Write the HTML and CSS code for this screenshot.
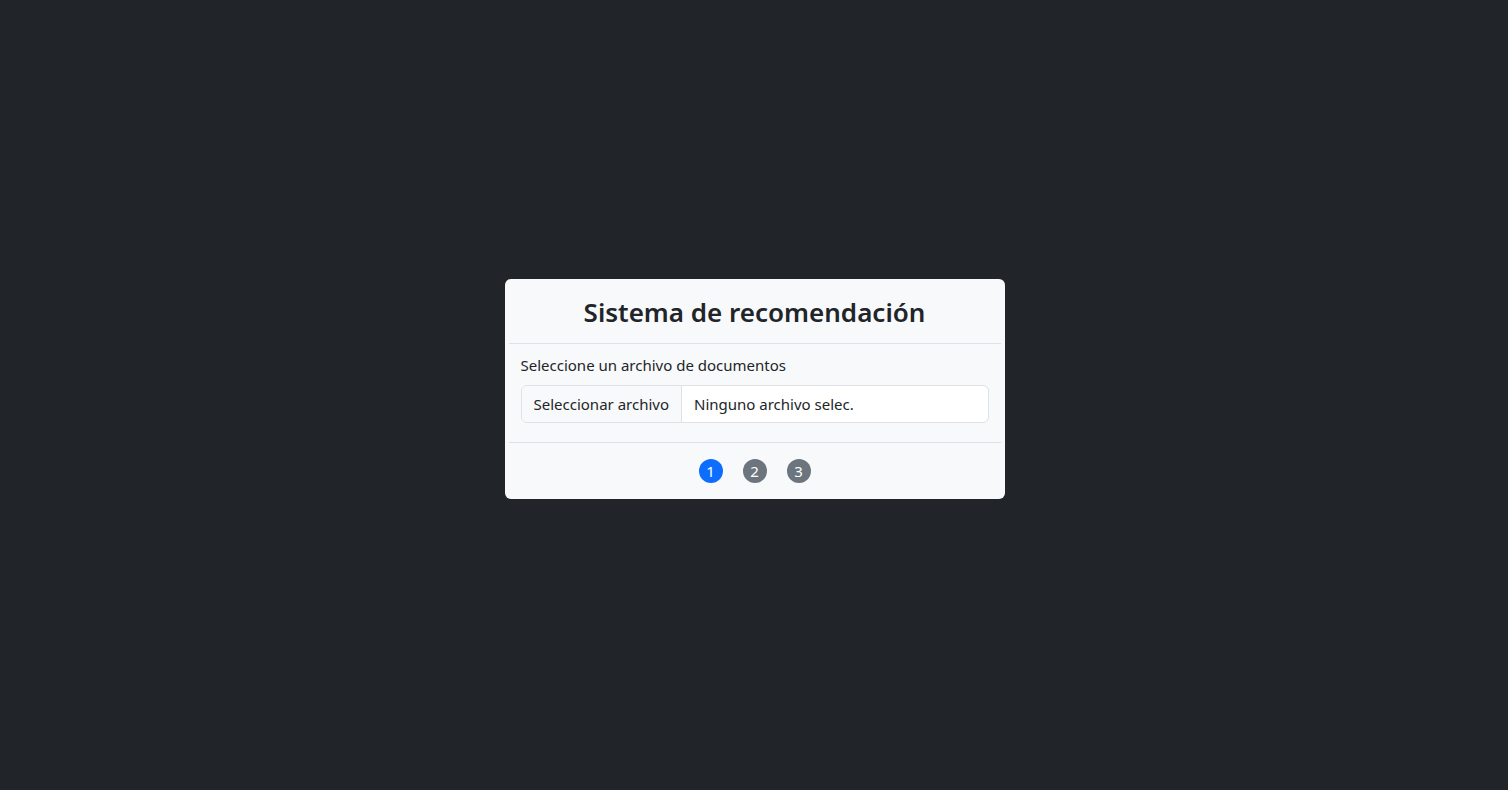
FILE: index.html
```html
<!DOCTYPE html>
<html lang="es">
<head>
<meta charset="utf-8">
<title>Sistema de recomendación</title>
<link rel="stylesheet" href="styles.css">
</head>
<body>
<main class="page">
  <section class="card">
    <header class="card-header">
      <h3 class="title">Sistema de recomendación</h3>
    </header>
    <div class="divider"></div>
    <div class="card-body">
      <label class="label">Seleccione un archivo de documentos</label>
      <div class="file-input">
        <span class="file-btn">Seleccionar archivo</span>
        <span class="file-name">Ninguno archivo selec.</span>
      </div>
    </div>
    <div class="divider"></div>
    <footer class="card-footer">
      <span class="step active">1</span>
      <span class="step">2</span>
      <span class="step">3</span>
    </footer>
  </section>
</main>
</body>
</html>
```

FILE: styles.css
```css
* { box-sizing: border-box; }
html, body { margin: 0; padding: 0; }
body {
  background: #212529;
  font-family: "Segoe UI", "Noto Sans", "Open Sans", sans-serif;
  color: #212529;
}
.page {
  min-height: 100vh;
  display: flex;
  justify-content: center;
  align-items: flex-start;
  padding-top: 279px;
  padding-left: 1px;
}
.card {
  width: 500px;
  background: #f8f9fa;
  border-radius: 6px;
  display: flex;
  flex-direction: column;
}
.card-header {
  height: 64px;
  padding-top: 4px;
  display: flex;
  align-items: center;
  justify-content: center;
}
.title {
  margin: 0;
  font-size: 26px;
  font-weight: 600;
  line-height: 1.2;
  color: #212529;
}
.divider {
  height: 1px;
  background: #dee2e6;
  margin: 0 4px;
}
.card-body {
  padding: 10px 16px 19px;
  display: flex;
  flex-direction: column;
}
.label {
  font-size: 15px;
  line-height: 22px;
  color: #212529;
  margin-bottom: 9px;
}
.file-input {
  display: flex;
  height: 38px;
  border: 1px solid #dee2e6;
  border-radius: 6px;
  background: #fff;
  overflow: hidden;
  font-size: 15px;
}
.file-btn {
  display: flex;
  align-items: center;
  padding: 0 12px;
  background: #f8f9fa;
  border-right: 1px solid #dee2e6;
  color: #212529;
}
.file-name {
  display: flex;
  align-items: center;
  padding: 0 12px;
  color: #212529;
}
.card-footer {
  height: 56px;
  display: flex;
  align-items: center;
  justify-content: center;
  gap: 20px;
}
.step {
  width: 24px;
  height: 24px;
  border-radius: 50%;
  background: #6c757d;
  color: #fff;
  font-size: 15px;
  display: flex;
  align-items: center;
  justify-content: center;
}
.step.active { background: #0d6efd; }
```
